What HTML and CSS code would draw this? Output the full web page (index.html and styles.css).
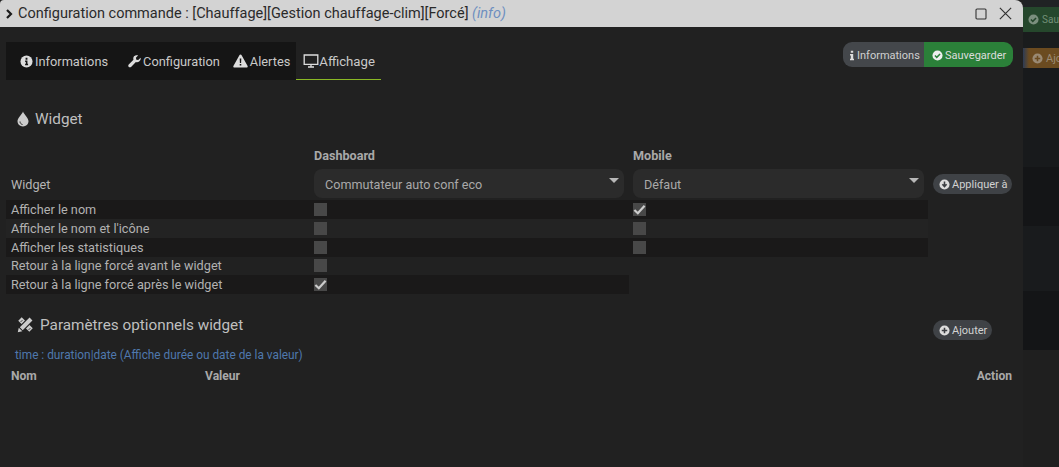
FILE: index.html
```html
<!DOCTYPE html>
<html lang="fr">
<head>
<meta charset="utf-8">
<title>Configuration commande</title>
<link rel="stylesheet" href="styles.css">
</head>
<body>
<div class="screen">
  <main class="dialog">
    <header class="titlebar">
      <svg class="chevron" viewBox="0 0 8 10"><path d="M2 1l4 4-4 4" fill="none" stroke="#1c1c1c" stroke-width="2.200"/></svg>
      <span class="title">Configuration commande : [Chauffage][Gestion chauffage-clim][Forcé] <em>(info)</em></span>
      <svg class="winbtn max" viewBox="0 0 12 12"><rect x="1" y="1" width="10" height="10" rx="1" fill="none" stroke="#333" stroke-width="1.100"/></svg>
      <svg class="winbtn close" viewBox="0 0 12 12"><path d="M.8.8l10.400 10.400M11.200.8L.8 11.200" fill="none" stroke="#333" stroke-width="1.100"/></svg>
    </header>
    <div class="toolbar">
      <nav class="tabs">
        <a class="tab t1"><svg class="ico" viewBox="0 0 14 14"><circle cx="7" cy="7" r="6.500" fill="#ddd"/><path d="M6 3h2v2H6zM5.500 6H8v3.500h.7V11H5.500V9.500h.8V7.500h-.8z" fill="#151515"/></svg>Informations</a>
        <a class="tab t2"><svg class="ico" viewBox="0 0 14 14"><path d="M13.600 3l-2.600 2.500-2-.5-.5-2L11 .4C9 -.2 7.100.4 6.300 1.700c-.7 1-.8 2.300-.4 3.400L.8 10.300c-.7.700-.7 1.800 0 2.500s1.800.700 2.500 0L8.500 7.600c1.200.4 2.500.2 3.500-.6 1.300-.9 2-2.500 1.600-4z" fill="#ddd"/></svg>Configuration</a>
        <a class="tab t3"><svg class="ico wide" viewBox="0 0 15 14"><path d="M7.500.5c.5 0 .9.300 1.100.7l6 10.800c.4.800-.1 1.600-1 1.600h-12.200c-.9 0-1.400-.8-1-1.600l6-10.800c.2-.4.600-.7 1.100-.7z" fill="#ddd"/><path d="M6.700 4.500h1.600l-.2 4.500H6.900zM6.700 10h1.600v1.600H6.700z" fill="#151515"/></svg>Alertes</a>
        <a class="tab active"><svg class="ico monitor" viewBox="0 0 16 14"><path d="M1.200 1h13.600v9.300H1.200zM5 13h6M8 10.500V13" fill="none" stroke="#ddd" stroke-width="1.300"/></svg>Affichage</a>
      </nav>
      <div class="btn-group">
        <a class="gbtn grey"><svg class="ico-i" viewBox="0 0 5 12"><path d="M1 0h3v2.500H1zM0 4h4v6h1v2H0v-2h1V6H0z" fill="#ddd"/></svg>Informations</a>
        <a class="gbtn green"><svg class="ico-s" viewBox="0 0 12 12"><circle cx="6" cy="6" r="5.500" fill="#eee"/><path d="M3.200 6l2 2 3.600-3.700" fill="none" stroke="#2b8039" stroke-width="1.600"/></svg>Sauvegarder</a>
      </div>
    </div>

    <h3 class="section s-widget"><svg class="drop" viewBox="0 0 12 16"><path d="M6 .5C7 3.500 11.500 7 11.500 10.300 11.500 13.300 9 15.500 6 15.500S.5 13.300.5 10.300C.5 7 5 3.500 6 .5z" fill="#ccc"/><path d="M3 10.500c0 1.500 1 2.700 2.500 3" fill="none" stroke="#222" stroke-width="1"/></svg>Widget</h3>

    <div class="row heads">
      <div class="c-label"></div>
      <div class="c-dash"><b>Dashboard</b></div>
      <div class="c-mob"><b>Mobile</b></div>
    </div>
    <div class="row selects">
      <div class="c-label">Widget</div>
      <div class="c-dash"><div class="select">Commutateur auto conf eco<i class="caret"></i></div></div>
      <div class="c-mob"><div class="select">Défaut<i class="caret"></i></div></div>
      <a class="pill apply"><svg class="pico" viewBox="0 0 12 12"><circle cx="6" cy="6" r="5.500" fill="#ddd"/><path d="M6 2.800v5M3.700 5.800L6 8.300l2.300-2.500" fill="none" stroke="#3c3f43" stroke-width="1.700"/></svg>Appliquer à</a>
    </div>
    <div class="row opt dark">
      <div class="c-label">Afficher le nom</div>
      <div class="c-dash"><span class="check"></span></div>
      <div class="c-mob"><span class="check on"><svg viewBox="0 0 14 14"><path d="M1.500 7.500l3.700 3.500 7.300-8" fill="none" stroke="#ccc" stroke-width="2.400"/></svg></span></div>
    </div>
    <div class="row opt light">
      <div class="c-label">Afficher le nom et l'icône</div>
      <div class="c-dash"><span class="check"></span></div>
      <div class="c-mob"><span class="check"></span></div>
    </div>
    <div class="row opt dark">
      <div class="c-label">Afficher les statistiques</div>
      <div class="c-dash"><span class="check"></span></div>
      <div class="c-mob"><span class="check"></span></div>
    </div>
    <div class="row opt">
      <div class="c-label">Retour à la ligne forcé avant le widget</div>
      <div class="c-dash"><span class="check"></span></div>
    </div>
    <div class="row opt short dark">
      <div class="c-label">Retour à la ligne forcé après le widget</div>
      <div class="c-dash"><span class="check on"><svg viewBox="0 0 14 14"><path d="M1.500 7.500l3.700 3.500 7.300-8" fill="none" stroke="#ccc" stroke-width="2.400"/></svg></span></div>
    </div>

    <div class="param-head">
      <h3 class="section s-param"><svg class="tools" viewBox="0 0 16 16"><path d="M2.800 2.800l10.400 10.400" fill="none" stroke="#ccc" stroke-width="4.600"/><path d="M3.500 5.500l1.500-1.500M6 8l1.500-1.500M11 13l1.500-1.500" stroke="#222" stroke-width=".9"/><path d="M13.200 2.800L4 12" fill="none" stroke="#222" stroke-width="6"/><path d="M13.200 2.800L4 12" fill="none" stroke="#ccc" stroke-width="3.800"/><path d="M.7 15.300l1-4.300 3.300 3.300z" fill="#ccc"/></svg>Paramètres optionnels widget</h3>
      <a class="pill add"><svg class="pico" viewBox="0 0 12 12"><circle cx="6" cy="6" r="5.500" fill="#ddd"/><path d="M6 3v6M3 6h6" stroke="#3c3f43" stroke-width="1.700"/></svg>Ajouter</a>
    </div>
    <p class="hint">time : duration|date (Affiche durée ou date de la valeur)</p>
    <div class="thead"><b class="th-nom">Nom</b><b class="th-val">Valeur</b><b class="th-act">Action</b></div>
  </main>
  <aside class="backdrop">
    <div class="bd-a"></div>
    <div class="bd-save"><svg class="bico" viewBox="0 0 12 12"><circle cx="6" cy="6" r="5.500" fill="#7b8f7e"/><path d="M3.200 6l2 2 3.600-3.700" fill="none" stroke="#25472c" stroke-width="1.600"/></svg>Sau</div>
    <div class="bd-b"></div>
    <div class="bd-add"><svg class="bico" viewBox="0 0 12 12"><circle cx="6" cy="6" r="5.500" fill="#9a8a74"/><path d="M6 3v6M3 6h6" stroke="#6b4b20" stroke-width="1.700"/></svg>Ajo</div>
    <div class="bd-c"></div>
    <div class="bd-d"></div>
    <div class="bd-e"></div>
    <div class="bd-d"></div>
    <div class="bd-f"></div>
  </aside>
</div>
</body>
</html>
```

FILE: styles.css
```css
* { box-sizing: border-box; }
html, body { margin: 0; height: 100%; }
body { background: #1a1b1c; font-family: Roboto, "Liberation Sans", sans-serif; font-size: 13px; color: #b9b9b9; overflow: hidden; }
.screen { display: flex; width: 1059px; height: 467px; overflow: hidden; }
.dialog { width: 1023px; height: 467px; flex: none; background: #212121; }

.titlebar { height: 27px; background: #d3d3d3; display: flex; align-items: center; padding: 0 11px 0 5px; color: #2a2a2a; border-top-left-radius: 4px; border-top-right-radius: 8px; }
.chevron { width: 8px; height: 10px; margin-right: 5px; flex: none; }
.title { font-size: 14.500px; flex: 1; white-space: nowrap; }
.title em { color: #6e8fc0; }
.winbtn { width: 12px; height: 12px; flex: none; }
.max { margin-right: 12px; }
.close { width: 13px; height: 13px; }

.toolbar { display: flex; justify-content: space-between; align-items: flex-start; padding: 15px 10px 0 6px; height: 53px; }
.tabs { display: flex; height: 38px; background: #151515; }
.tab { display: flex; align-items: center; color: #c9c9c9; font-size: 12.800px; }
.t1 { padding: 0 20px 0 14px; }
.t2 { padding: 0 13px 0 0; }
.t3 { padding: 0 6px 0 0; }
.tab.active { background: #212121; border-bottom: 1px solid #8ab825; padding: 1px 0 0 7px; width: 85px; font-size: 13.200px; }
.ico { width: 13px; height: 13px; margin-right: 2px; flex: none; }
.ico.wide { width: 15px; height: 14px; margin-right: 2px; }
.ico.monitor { width: 16px; height: 14px; margin-right: 0; }

.btn-group { display: flex; height: 25px; border-radius: 9px; overflow: hidden; font-size: 11px; color: #d0d0d0; }
.gbtn { display: flex; align-items: center; white-space: nowrap; padding-top: 1px; }
.grey { background: #44474b; padding-left: 7px; width: 81px; }
.green { background: #2b8039; padding-left: 8px; width: 89px; color: #dcdcdc; }
.ico-i { width: 4px; height: 11px; margin-right: 3px; flex: none; }
.ico-s { width: 11px; height: 11px; margin-right: 2px; flex: none; }

.section { margin: 0; font-weight: 400; color: #bfbfbf; font-size: 15.300px; display: flex; align-items: center; }
.s-widget { padding-left: 17px; height: 20px; margin-top: 29px; }
.drop { width: 12px; height: 16px; margin-right: 6px; flex: none; }
.tools { width: 17px; height: 17px; margin-right: 6px; flex: none; }

.row { display: flex; }
.c-label { width: 308px; padding-left: 5px; flex: none; white-space: nowrap; }
.c-dash { width: 319px; flex: none; }
.c-mob { width: 295px; flex: none; }
.heads { margin: 15px 0 0 6px; height: 25px; padding-bottom: 3px; align-items: center; }
.heads b { font-weight: 700; font-size: 12.600px; color: #a9a9a9; }
.selects { margin-left: 6px; height: 31px; align-items: flex-start; }
.selects .c-label { padding-top: 8px; color: #b5b5b5; font-size: 12.700px; }
.select { position: relative; width: 310px; height: 29px; background: #2b2b2b; border-radius: 8px; padding: 8px 11px; font-size: 12.600px; line-height: 15px; color: #a9a9a9; }
.c-mob .select { width: 291px; }
.caret { position: absolute; right: 5px; top: 9px; border: 5px solid transparent; border-top-color: #b8b8b8; border-bottom: 0; }
.pill { display: inline-flex; align-items: center; height: 20px; border-radius: 10px; background: #3f4246; color: #d2d2d2; font-size: 11px; padding: 0 0 0 6px; white-space: nowrap; }
.pico { width: 11px; height: 11px; margin-right: 2px; flex: none; }
.apply { margin: 5px 0 0 5px; width: 79px; }

.opt { margin-left: 6px; height: 18.850px; width: 922px; align-items: center; font-size: 12.700px; color: #b2b2b2; }
.opt.dark { background: #1a1919; }
.opt.light { background: #232323; }
.opt.short { width: 623px; }
.check { display: block; width: 13px; height: 13px; background: #484848; }
.check svg { display: block; width: 13px; height: 13px; }

.param-head { display: flex; justify-content: space-between; align-items: flex-start; padding: 0 31px 0 17px; margin-top: 20.750px; }
.s-param { height: 20px; }
.add { width: 59px; margin-top: 5px; padding-top: 1px; }
.hint { margin: 8px 0 0 15px; font-size: 11.850px; line-height: 14px; color: #4f78ad; }
.thead { display: flex; padding: 0 11px; margin-top: 7px; font-size: 12.100px; color: #a9a9a9; }
.th-nom { width: 194px; }
.th-val { flex: 1; }

.backdrop { flex: 1; display: flex; flex-direction: column; background: #1f1f1f; font-size: 10px; overflow: hidden; }
.bd-a { height: 7px; flex: none; background: #202224; }
.bd-save { height: 25px; flex: none; background: #25472c; color: #728f77; display: flex; align-items: center; padding-left: 5px; white-space: nowrap; }
.bd-b { height: 16px; flex: none; background: #1a1c1d; }
.bd-add { height: 20px; flex: none; background: linear-gradient(to right, #2c3b55, #6b4b20 6px); color: #9a8a74; display: flex; align-items: center; padding-left: 9px; white-space: nowrap; font-size: 11px; }
.bd-c { height: 99px; flex: none; background: #181a1c; }
.bd-d { height: 59px; flex: none; background: #141517; }
.bd-e { height: 65px; flex: none; background: #191b1d; }
.bd-f { flex: 1; background: #1f1f1f; }
.bico { width: 11px; height: 11px; margin-right: 3px; flex: none; }
```
